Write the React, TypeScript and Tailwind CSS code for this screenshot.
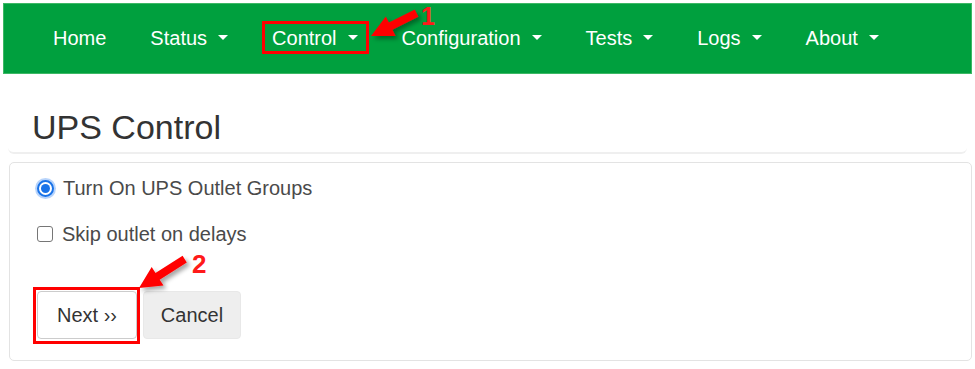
import React from "react";

function Caret() {
  return (
    <span className="ml-[11px] inline-block w-0 h-0 border-l-[5px] border-r-[5px] border-t-[5px] border-l-transparent border-r-transparent border-t-white" />
  );
}

function NavItem({ label, caret = true }: { label: string; caret?: boolean }) {
  return (
    <div className="flex items-center">
      <span>{label}</span>
      {caret && <Caret />}
    </div>
  );
}

export default function App() {
  return (
    <div
      className="relative w-[975px] h-[369px] bg-white overflow-hidden"
      style={{ fontFamily: '"Liberation Sans", Arial, sans-serif' }}
    >
      <nav className="mx-[3px] mt-[3px] h-[71px] bg-[#00a03e] border border-[#3cb865] flex items-center pl-[49px] pb-[2px] gap-[44px] text-[20px] leading-[20px] text-white">
        <NavItem label="Home" caret={false} />
        <NavItem label="Status" />
        <NavItem label="Control" />
        <NavItem label="Configuration" />
        <NavItem label="Tests" />
        <NavItem label="Logs" />
        <NavItem label="About" />
      </nav>

      <div className="mx-[8px] pt-[36px] pb-[8px] border-b-2 border-[#efefef] rounded-b-[6px]">
        <h1 className="pl-[24px] text-[34px] leading-none text-[#333]">UPS Control</h1>
      </div>

      <div className="ml-[9px] mr-[3px] mt-[8px] h-[199px] border border-[#e3e3e3] rounded-[5px] pl-[27px] pt-[12px] text-[20px] text-[#4a4a4a]">
        <div className="h-[26px] flex items-center">
          <span className="w-[17px] h-[17px] rounded-full border-2 border-[#1a73e8] bg-white flex items-center justify-center shadow-[0_0_0_2px_#b8d4fb]">
            <span className="w-[9px] h-[9px] rounded-full bg-[#1a73e8]" />
          </span>
          <span className="ml-[9px]">Turn On UPS Outlet Groups</span>
        </div>
        <div className="mt-[20px] h-[26px] flex items-center">
          <span className="w-[16px] h-[16px] rounded-[3px] border-[1.5px] border-[#767676] bg-white" />
          <span className="ml-[9px]">Skip outlet on delays</span>
        </div>
        <div className="mt-[44px] flex gap-[6px]">
          <button className="w-[100px] h-[48px] bg-white border border-[#cccccc] rounded-[4px] text-[#333] text-[20px]">
            Next ››
          </button>
          <button className="w-[98px] h-[48px] bg-[#eeeeee] border border-[#e8e8e8] rounded-[4px] text-[#333] text-[20px]">
            Cancel
          </button>
        </div>
      </div>

      {/* Annotation boxes */}
      <div className="absolute left-[262px] top-[21px] w-[107px] h-[33px] border-[3px] border-[#ff0000]" />
      <div className="absolute left-[33px] top-[287px] w-[107px] h-[57px] border-[3px] border-[#ff0000]" />

      {/* Arrows */}
      <svg className="absolute left-0 top-0 pointer-events-none" width="975" height="369">
        <defs>
          <filter id="sh" x="-50%" y="-50%" width="200%" height="200%">
            <feDropShadow dx="3" dy="3" stdDeviation="2" floodColor="#000" floodOpacity="0.35" />
          </filter>
        </defs>
        <polygon
          filter="url(#sh)"
          fill="#ff0000"
          points="371,36 395.6,36 392.5,29.8 418.4,16.8 414.8,9.6 388.9,22.6 385.8,16.4"
        />
        <polygon
          filter="url(#sh)"
          fill="#ff0000"
          points="139,288 163.5,285.6 159.7,279.7 186.8,262.6 182.6,255.8 155.5,272.9 151.7,267"
        />
      </svg>

      <div className="absolute left-[421px] top-[7px] h-[18px] text-[25px] leading-[18px] font-bold text-[#ff1a1a]">1</div>
      <div className="absolute left-[192px] top-[251px] text-[26px] leading-none font-bold text-[#ff1a1a]">2</div>
    </div>
  );
}
